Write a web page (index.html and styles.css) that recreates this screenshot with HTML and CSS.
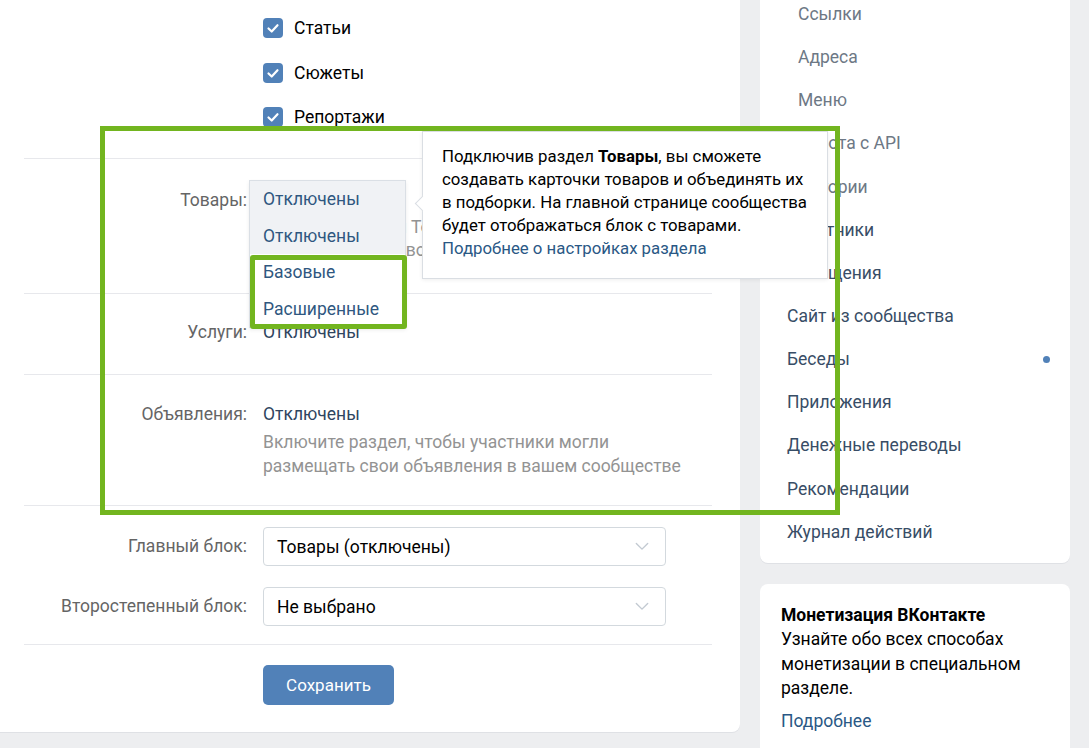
FILE: index.html
```html
<!DOCTYPE html>
<html lang="ru">
<head>
    <meta charset="utf-8">
    <title>Разделы — управление сообществом</title>
    <link rel="stylesheet" href="styles.css">
</head>
<body>
<div class="page">

    <!-- Main settings card -->
    <div class="main-card">
        <div class="checks">
            <div class="check-row">
                <span class="checkbox"><svg viewBox="0 0 20 20"><polyline points="5.5,10.5 8.7,13.5 14.5,7.2"/></svg></span>
                Статьи
            </div>
            <div class="check-row">
                <span class="checkbox"><svg viewBox="0 0 20 20"><polyline points="5.5,10.5 8.7,13.5 14.5,7.2"/></svg></span>
                Сюжеты
            </div>
            <div class="check-row">
                <span class="checkbox"><svg viewBox="0 0 20 20"><polyline points="5.5,10.5 8.7,13.5 14.5,7.2"/></svg></span>
                Репортажи
            </div>
        </div>

        <div class="field-row goods-row">
            <div class="field-label">Товары:</div>
            <div class="field-value">
                <div class="value-text">Отключены</div>
                <div class="value-desc">Включите раздел Товары, чтобы<br>продавать товар во ВКонтакте</div>

                <!-- opened section mode list -->
                <div class="dropdown">
                    <div class="dropdown-item dropdown-grey">Отключены</div>
                    <div class="dropdown-item dropdown-grey">Отключены</div>
                    <div class="dropdown-item">Базовые</div>
                    <div class="dropdown-item">Расширенные</div>
                    <div class="mark-options"></div>
                </div>

                <div class="tooltip">
                    Подключив раздел <b>Товары</b>, вы сможете<br>
                    создавать карточки товаров и объединять их<br>
                    в подборки. На главной странице сообщества<br>
                    будет отображаться блок с товарами.<br>
                    <a class="link" href="#">Подробнее о настройках раздела</a>
                </div>
            </div>
        </div>

        <div class="field-row services-row">
            <div class="field-label">Услуги:</div>
            <div class="field-value">
                <div class="value-text">Отключены</div>
            </div>
        </div>

        <div class="field-row ads-row">
            <div class="field-label">Объявления:</div>
            <div class="field-value">
                <div class="value-text">Отключены</div>
                <div class="value-desc">Включите раздел, чтобы участники могли<br>размещать свои объявления в вашем сообществе</div>
            </div>
        </div>

        <div class="blocks">
            <div class="block-row">
                <div class="field-label">Главный блок:</div>
                <div class="select">
                    <span>Товары (отключены)</span>
                    <svg class="chevron" viewBox="0 0 16 10"><polyline points="1.5,1.5 8,8 14.5,1.5"/></svg>
                </div>
            </div>
            <div class="block-row">
                <div class="field-label">Второстепенный блок:</div>
                <div class="select">
                    <span>Не выбрано</span>
                    <svg class="chevron" viewBox="0 0 16 10"><polyline points="1.5,1.5 8,8 14.5,1.5"/></svg>
                </div>
            </div>
        </div>

        <div class="actions">
            <button class="button">Сохранить</button>
        </div>
    </div>

    <!-- Right column -->
    <div class="side">
        <div class="menu-card">
            <div class="menu-item menu-sub">Ссылки</div>
            <div class="menu-item menu-sub">Адреса</div>
            <div class="menu-item menu-sub">Меню</div>
            <div class="menu-item menu-sub">Работа с API</div>
            <div class="menu-item menu-sub">Истории</div>
            <div class="menu-item">Участники</div>
            <div class="menu-item">Сообщения</div>
            <div class="menu-item">Сайт из сообщества</div>
            <div class="menu-item">Беседы <span class="menu-dot"></span></div>
            <div class="menu-item">Приложения</div>
            <div class="menu-item">Денежные переводы</div>
            <div class="menu-item">Рекомендации</div>
            <div class="menu-item">Журнал действий</div>
        </div>

        <div class="promo-card">
            <div class="promo-title">Монетизация ВКонтакте</div>
            <div>Узнайте обо всех способах<br>монетизации в специальном<br>разделе.</div>
            <a class="link promo-link" href="#">Подробнее</a>
        </div>
    </div>

    <!-- highlight frame over the sections -->
    <div class="mark-area"></div>
</div>
</body>
</html>
```

FILE: styles.css
```css
body {
    margin: 0;
    background-color: #edeef0;
    font-family: Roboto, "Open Sans", sans-serif;
    font-size: 17.5px;
    color: #000;
    overflow: hidden;
}

.page {
    position: relative;
    display: flex;
    align-items: flex-start;
    gap: 20px;
}

.link {
    color: #2a5885;
    text-decoration: none;
}

/** Main card **/

.main-card {
    width: 760px;
    box-sizing: border-box;
    margin: -20px 0 0 -20px;
    padding: 0 28px 27px 44px;
    background-color: #fff;
    border-radius: 8px;
    box-shadow: 0 1px 0 0 #dfe1e5;
}

.checks {
    padding: 26px 0 18.5px 239px;
    border-bottom: 1px solid #e7e8ec;
}

.check-row {
    display: flex;
    align-items: center;
    gap: 11px;
    height: 44.5px;
    color: #000;
}

.checkbox {
    width: 20px;
    height: 20px;
    border-radius: 4px;
    background-color: #5181b8;
}

.checkbox svg {
    display: block;
    width: 20px;
    height: 20px;
    fill: none;
    stroke: #fff;
    stroke-width: 2.2;
    stroke-linecap: round;
    stroke-linejoin: round;
}

.field-row {
    display: grid;
    grid-template-columns: 223px 403px;
    column-gap: 16px;
    padding: 27px 0 29px;
    border-bottom: 1px solid #e7e8ec;
}

.goods-row {
    padding: 29px 0 31px;
}

.services-row {
    padding: 26px 0 30px;
}

.ads-row {
    padding: 27px 0 27px;
}

.field-label {
    text-align: right;
    color: #656565;
    line-height: 24px;
}

.field-value {
    position: relative;
}

.value-text {
    line-height: 24px;
    color: #2f4560;
}

.value-desc {
    margin-top: 4px;
    line-height: 23px;
    color: #939393;
    white-space: nowrap;
}

.ads-row .value-desc {
    margin-top: 5px;
    line-height: 23.5px;
}

/* Opened list of section modes */
.dropdown {
    position: absolute;
    left: -14px;
    top: -8px;
    width: 157px;
    box-sizing: border-box;
    border: 1px solid #dadfe5;
    background-color: #fff;
    box-shadow: 0 2px 4px rgba(0, 0, 0, 0.08);
    z-index: 2;
}

.dropdown-item {
    height: 36.5px;
    line-height: 36.5px;
    padding-left: 13px;
    color: #2f5780;
    white-space: nowrap;
}

.dropdown-grey {
    background-color: #f0f2f5;
}

.mark-options {
    position: absolute;
    left: 0;
    top: 74px;
    width: 157px;
    height: 74px;
    box-sizing: border-box;
    border: 5px solid #72b51f;
    border-radius: 3px;
}

.tooltip {
    position: absolute;
    left: 159px;
    top: -57px;
    width: 406px;
    box-sizing: border-box;
    padding: 13px 19px 18px;
    background-color: #fff;
    border: 1px solid #dadee3;
    box-shadow: 0 1px 4px rgba(0, 0, 0, 0.07);
    font-size: 16.8px;
    line-height: 23px;
    color: #000;
    white-space: nowrap;
    z-index: 3;
}

.tooltip::before {
    content: "";
    position: absolute;
    left: -6px;
    top: 66px;
    width: 10px;
    height: 10px;
    background-color: #fff;
    border-left: 1px solid #dadee3;
    border-bottom: 1px solid #dadee3;
    transform: rotate(45deg);
}

.tooltip b {
    font-weight: 700;
}

/* Main / secondary block selects */
.blocks {
    display: flex;
    flex-direction: column;
    gap: 21px;
    padding: 21px 0 18px;
    border-bottom: 1px solid #e7e8ec;
}

.block-row {
    display: grid;
    grid-template-columns: 223px 403px;
    column-gap: 16px;
}

.block-row .field-label {
    line-height: 39px;
}

.select {
    display: flex;
    align-items: center;
    justify-content: space-between;
    height: 39px;
    box-sizing: border-box;
    padding: 0 16px 0 13px;
    border: 1px solid #d3d9de;
    border-radius: 4px;
    color: #000;
}

.chevron {
    width: 14px;
    height: 9px;
    fill: none;
    stroke: #c3cad2;
    stroke-width: 1.6;
    stroke-linecap: round;
    stroke-linejoin: round;
}

.actions {
    padding-top: 20px;
}

.button {
    margin-left: 239px;
    width: 131px;
    height: 40px;
    border: none;
    border-radius: 5px;
    background-color: #5181b8;
    color: #fff;
    font-family: inherit;
    font-size: 17px;
}

/** Right column **/

.side {
    width: 310px;
    display: flex;
    flex-direction: column;
    gap: 21px;
}

.menu-card {
    margin-top: -20px;
    padding: 12.5px 0 9.5px;
    background-color: #fff;
    border-radius: 8px;
    box-shadow: 0 1px 0 0 #dfe1e5;
}

.menu-item {
    display: flex;
    align-items: center;
    justify-content: space-between;
    height: 43.15px;
    padding: 0 20px 0 27px;
    color: #384d66;
}

.menu-sub {
    padding-left: 38px;
    color: #6d7885;
}

.menu-dot {
    width: 7px;
    height: 7px;
    border-radius: 50%;
    background-color: #5181b8;
}

.promo-card {
    padding: 19px 21px 30px;
    background-color: #fff;
    border-radius: 8px;
    line-height: 24.5px;
    color: #000;
}

.promo-title {
    font-weight: 700;
}

.promo-link {
    display: block;
    margin-top: 8px;
}

/* Highlight frame drawn over the sections */
.mark-area {
    position: absolute;
    left: 100px;
    top: 126px;
    width: 740px;
    height: 389px;
    box-sizing: border-box;
    border: 5px solid #72b51f;
    z-index: 4;
    pointer-events: none;
}
```
